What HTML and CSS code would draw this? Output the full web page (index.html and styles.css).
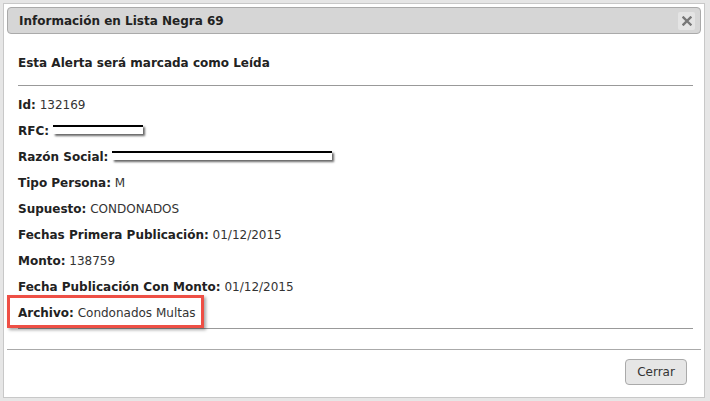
FILE: index.html
```html
<!DOCTYPE html>
<html lang="es">
<head>
<meta charset="utf-8">
<title>Información en Lista Negra 69</title>
<link rel="stylesheet" href="styles.css">
</head>
<body>
<div class="dialog">
  <div class="titlebar">
    <span class="title">Información en Lista Negra 69</span>
    <span class="close"><svg width="10" height="10" viewBox="0 0 10 10"><path d="M1.5 1.5 L8.5 8.5 M8.5 1.5 L1.5 8.5" stroke="#777" stroke-width="2.4" stroke-linecap="square"/></svg></span>
  </div>
  <div class="content">
    <h3 class="notice">Esta Alerta será marcada como Leída</h3>
    <hr class="rule">
    <ul class="fields">
      <li><b>Id:</b> 132169</li>
      <li><b>RFC:</b> <span class="redact r1"></span></li>
      <li><b>Razón Social:</b> <span class="redact r2"></span></li>
      <li><b>Tipo Persona:</b> M</li>
      <li><b>Supuesto:</b> CONDONADOS</li>
      <li><b>Fechas Primera Publicación:</b> 01/12/2015</li>
      <li><b>Monto:</b> 138759</li>
      <li><b>Fecha Publicación Con Monto:</b> 01/12/2015</li>
      <li class="highlight"><b>Archivo:</b> Condonados Multas</li>
    </ul>
    <hr class="rule last">
  </div>
  <div class="footer">
    <button class="btn">Cerrar</button>
  </div>
</div>
</body>
</html>
```
FILE: styles.css
```css
html, body {
  margin: 0;
  padding: 0;
}
body {
  background: #e6e6e6;
  width: 710px;
  height: 401px;
  padding: 3px;
  box-sizing: border-box;
  font-family: "DejaVu Sans", Verdana, sans-serif;
  color: #222;
}
.dialog {
  background: #fff;
  border: 1px solid #c8c8c8;
  height: 395px;
  width: 702px;
  box-sizing: border-box;
  padding: 3px 3px 0;
  display: flex;
  flex-direction: column;
}
.titlebar {
  height: 27px;
  box-sizing: border-box;
  background: #d6d6d6;
  border: 1px solid #aaa;
  border-radius: 4px;
  display: flex;
  align-items: center;
  justify-content: space-between;
  padding: 0 5px 0 11px;
}
.title {
  font-weight: bold;
  font-size: 12px;
  color: #222;
}
.close {
  width: 17px;
  height: 18px;
  background: #e4e4e4;
  border-radius: 2px;
  display: flex;
  align-items: center;
  justify-content: center;
}
.content {
  padding: 0 8px 0 11px;
  flex: 1;
}
.notice {
  font-size: 12px;
  font-weight: bold;
  margin: 22px 0 0;
  height: 15px;
  line-height: 15px;
}
.rule {
  border: 0;
  border-top: 1px solid #999;
  margin: 14px 0 0;
  height: 0;
}
.fields {
  list-style: none;
  margin: 0;
  padding: 12px 0 0;
  font-size: 12px;
}
.fields li {
  height: 26px;
  line-height: 15px;
  color: #333;
}
.fields b {
  color: #222;
}
.redact {
  display: inline-block;
  height: 7px;
  background: #fff;
  border-top: 2px solid #000;
  vertical-align: 1px;
  box-shadow: 2px 2px 2px rgba(0,0,0,0.6);
}
.r1 { width: 90px; }
.r2 { width: 220px; }
.highlight {
  position: relative;
}
.highlight::before {
  content: "";
  position: absolute;
  left: -11px;
  top: -11px;
  width: 197px;
  height: 33px;
  box-sizing: border-box;
  border: 3px solid #ee4f45;
  box-shadow: 2px 2px 3px rgba(0,0,0,0.35);
}
.rule.last {
  margin-top: -4px;
}
.footer {
  border-top: 1px solid #aaa;
  height: 48px;
  box-sizing: border-box;
  display: flex;
  justify-content: flex-end;
  align-items: flex-start;
  padding: 9px 14px 0 0;
}
.btn {
  font-family: "DejaVu Sans", Verdana, sans-serif;
  font-size: 12px;
  color: #333;
  background: #e6e6e6;
  border: 1px solid #aaa;
  border-radius: 4px;
  width: 62px;
  height: 26px;
  padding: 0;
}
```
